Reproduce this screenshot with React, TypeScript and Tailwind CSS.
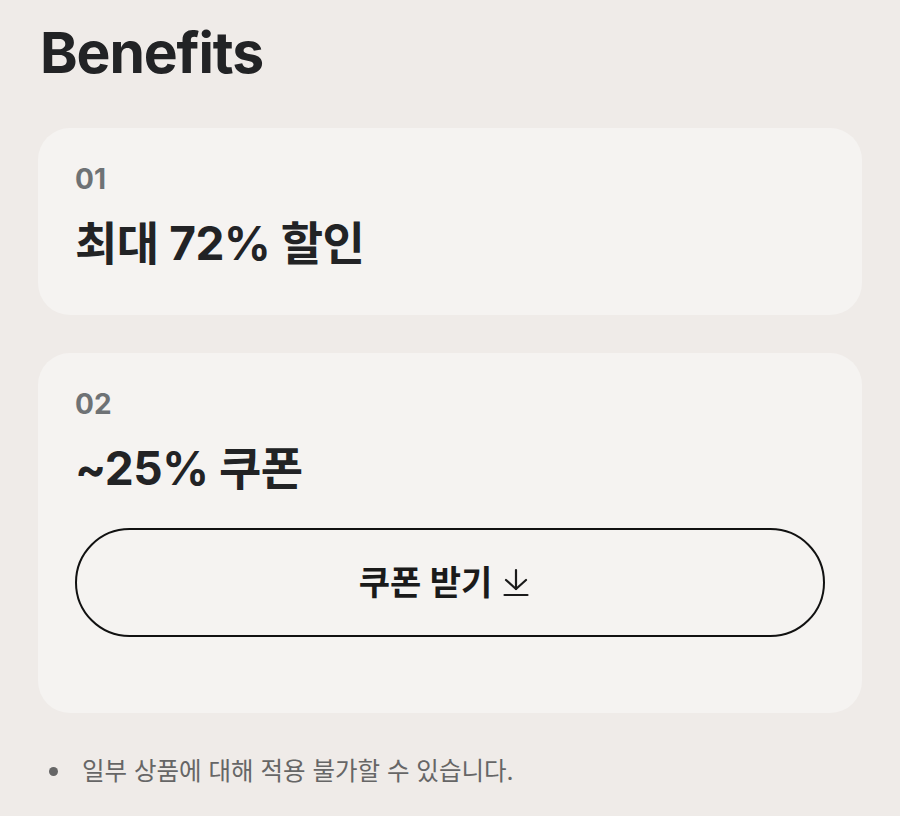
const font = "font-['Inter','Noto_Sans_CJK_KR',sans-serif]";

function DownloadArrow() {
  return (
    <svg width="26" height="29" viewBox="0 0 26 29" fill="none" stroke="currentColor" strokeWidth={2.2} strokeLinecap="round" strokeLinejoin="round">
      <path d="M13 2v19" />
      <path d="M3 12l10 9 10-9" />
      <path d="M1.5 27h23" />
    </svg>
  );
}

export default function App() {
  return (
    <div className={`min-h-screen bg-[#efebe8] text-[#222325] ${font}`}>
      {/* Title */}
      <h1 className="pl-[40px] pt-6 text-[57px] font-bold leading-none tracking-[-0.02em]">
        Benefits
      </h1>

      <div className="mt-[47px] px-[38px] flex flex-col gap-[38px]">
        {/* Card 01 */}
        <div className="bg-[#f5f3f1] rounded-[32px] px-[37px] pt-[37px] pb-[49px]">
          <p className="text-[28px] font-bold leading-none text-[#6e7275]">01</p>
          <h2 className="mt-[27px] text-[46px] font-bold leading-none tracking-[-0.01em]">
            최대 72% 할인
          </h2>
        </div>

        {/* Card 02 */}
        <div className="bg-[#f5f3f1] rounded-[32px] px-[37px] pt-[37px] pb-[76px]">
          <p className="text-[28px] font-bold leading-none text-[#6e7275]">02</p>
          <h2 className="mt-[27px] text-[46px] font-bold leading-none tracking-[-0.01em]">
            ~25% 쿠폰
          </h2>
          <button
            type="button"
            className="mt-[37px] w-full h-[109px] pr-[12px] rounded-full border-2 border-[#111] flex items-center justify-center gap-[11px] text-[34px] font-semibold text-[#1a1a1a]"
          >
            쿠폰 받기
            <DownloadArrow />
          </button>
        </div>
      </div>

      {/* Footnote */}
      <ul className="mt-[42px] pl-[49px] pb-8">
        <li className="flex items-center gap-[24px] text-[24.5px] leading-[32px] text-[#666]">
          <span className="w-[9px] h-[9px] rounded-full bg-[#666] shrink-0" />
          일부 상품에 대해 적용 불가할 수 있습니다.
        </li>
      </ul>
    </div>
  );
}
